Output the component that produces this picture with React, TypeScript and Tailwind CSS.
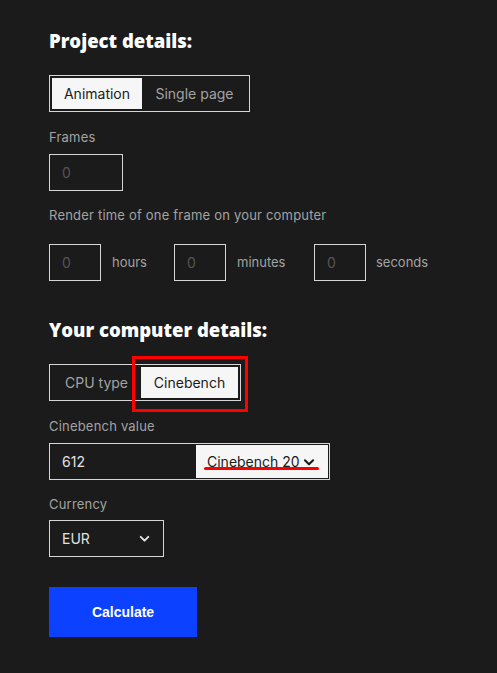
import React from 'react';

const Chevron: React.FC<{ className?: string }> = ({ className }) => (
  <svg className={className} viewBox="0 0 24 24" fill="none" stroke="currentColor" strokeWidth={3.5} strokeLinecap="round" strokeLinejoin="round">
    <path d="M5 9l7 7 7-7" />
  </svg>
);

const Heading: React.FC<{ children: React.ReactNode }> = ({ children }) => (
  <h2 className="h-[19px] text-[18.5px] font-extrabold text-white leading-[19px] [font-family:'Open_Sans',sans-serif]">{children}</h2>
);

const Label: React.FC<{ children: React.ReactNode; className?: string }> = ({ children, className }) => (
  <div className={`text-[13px] tracking-[0.2px] text-[#a3a3a3] leading-none ${className ?? ''}`}>{children}</div>
);

const NumBox: React.FC<{ w: string }> = ({ w }) => (
  <div className={`${w} h-[37px] border border-[#d6d6d6] flex items-center pl-[12px] text-[14px] text-[#555]`}>0</div>
);

const App: React.FC = () => {
  return (
    <div className="min-h-[673px] bg-[#1b1b1b] px-[49px] pt-[31px] [font-family:Inter,'Noto_Sans',sans-serif]">
      <Heading>Project details:</Heading>

      <div className="mt-[25px] inline-flex border border-[#d6d6d6] p-[2px]">
        <button className="w-[90px] h-[31px] bg-[#f6f6f6] text-[14px] text-[#1b1b1b]">Animation</button>
        <button className="w-[105px] h-[31px] text-[14px] text-[#a3a3a3]">Single page</button>
      </div>

      <Label className="mt-[19px]">Frames</Label>
      <div className="mt-[10px]">
        <NumBox w="w-[74px]" />
      </div>

      <Label className="mt-[18px]">Render time of one frame on your computer</Label>
      <div className="mt-[22px] flex items-center text-[13px] text-[#a3a3a3]">
        <NumBox w="w-[52px]" />
        <span className="ml-[11px] w-[62px]">hours</span>
        <NumBox w="w-[52px]" />
        <span className="ml-[11px] w-[77px]">minutes</span>
        <NumBox w="w-[52px]" />
        <span className="ml-[10px]">seconds</span>
      </div>

      <div className="mt-[39px]">
        <Heading>Your computer details:</Heading>
      </div>

      <div className="relative mt-[25px] inline-flex border border-[#d6d6d6] p-[2px]">
        <button className="w-[89px] h-[31px] text-[14px] text-[#a3a3a3]">CPU type</button>
        <button className="w-[97px] h-[31px] bg-[#f6f6f6] text-[14px] text-[#1b1b1b]">Cinebench</button>
        <div className="absolute left-[82px] top-[-9px] w-[116px] h-[56px] border-[3px] border-[#ff0000]" />
      </div>

      <Label className="mt-[19px]">Cinebench value</Label>
      <div className="mt-[10px] w-[281px] h-[37px] border border-[#d6d6d6] flex items-center pr-[1px]">
        <span className="pl-[12px] flex-1 text-[14px] text-[#e2e2e2]">612</span>
        <div className="relative w-[132px] h-[33px] bg-[#f6f6f6] flex items-center pl-[11px] text-[14px] text-[#1b1b1b]">
          <span>Cinebench 20</span>
          <Chevron className="w-[14px] h-[14px] ml-[2px] text-[#1b1b1b]" />
          <div className="absolute left-[8px] top-[22px] w-[115px] h-[3px] bg-[#ff0000] rounded-full" />
        </div>
      </div>

      <Label className="mt-[18px]">Currency</Label>
      <div className="mt-[9px] w-[115px] h-[37px] border border-[#d6d6d6] flex items-center justify-between pl-[12px] pr-[12px] text-[14px] text-[#e2e2e2]">
        <span>EUR</span>
        <Chevron className="w-[13px] h-[13px] text-[#e2e2e2]" />
      </div>

      <button className="mt-[30px] w-[148px] h-[50px] bg-[#0c41ff] text-white text-[14px] font-bold [font-family:'Liberation_Sans',Arial,sans-serif]">
        Calculate
      </button>
    </div>
  );
};

export default App;
